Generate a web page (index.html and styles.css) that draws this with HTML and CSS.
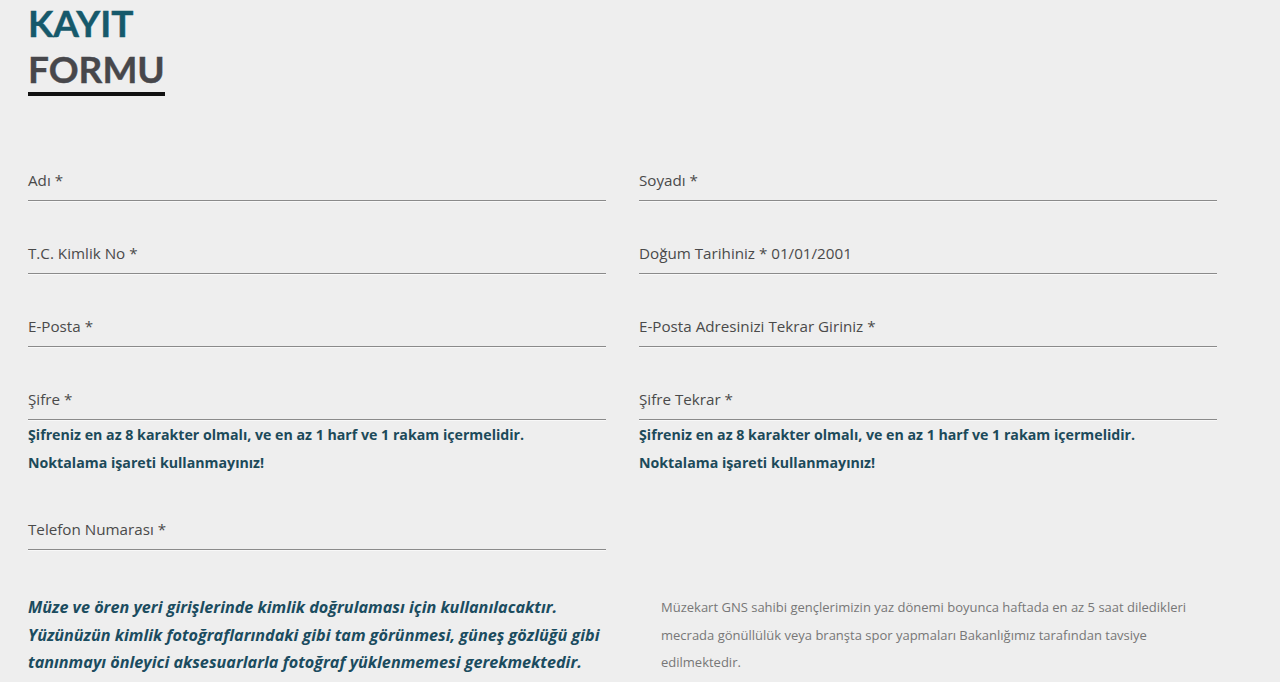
FILE: index.html
```html
<!DOCTYPE html>
<html lang="tr">
<head>
<meta charset="utf-8">
<title>Kayıt Formu</title>
<link rel="stylesheet" href="styles.css">
</head>
<body>
<main class="page">
  <h1 class="title"><span class="title-top">KAYIT</span><span class="title-bottom">FORMU</span></h1>

  <form class="form">
    <div class="col">
      <div class="field"><span class="label">Adı *</span></div>
      <div class="field"><span class="label">T.C. Kimlik No *</span></div>
      <div class="field"><span class="label">E-Posta *</span></div>
      <div class="field"><span class="label">Şifre *</span></div>
      <p class="hint">Şifreniz en az 8 karakter olmalı, ve en az 1 harf ve 1 rakam içermelidir.<br>Noktalama işareti kullanmayınız!</p>
      <div class="field"><span class="label">Telefon Numarası *</span></div>
    </div>
    <div class="col">
      <div class="field"><span class="label">Soyadı *</span></div>
      <div class="field"><span class="label">Doğum Tarihiniz * 01/01/2001</span></div>
      <div class="field"><span class="label">E-Posta Adresinizi Tekrar Giriniz *</span></div>
      <div class="field"><span class="label">Şifre Tekrar *</span></div>
      <p class="hint">Şifreniz en az 8 karakter olmalı, ve en az 1 harf ve 1 rakam içermelidir.<br>Noktalama işareti kullanmayınız!</p>
    </div>
  </form>

  <section class="notes">
    <p class="note-main">Müze ve ören yeri girişlerinde kimlik doğrulaması için kullanılacaktır.<br>Yüzünüzün kimlik fotoğraflarındaki gibi tam görünmesi, güneş gözlüğü gibi<br>tanınmayı önleyici aksesuarlarla fotoğraf yüklenmemesi gerekmektedir.</p>
    <p class="note-side">Müzekart GNS sahibi gençlerimizin yaz dönemi boyunca haftada en az 5 saat diledikleri<br>mecrada gönüllülük veya branşta spor yapmaları Bakanlığımız tarafından tavsiye<br>edilmektedir.</p>
  </section>
</main>
</body>
</html>
```

FILE: styles.css
```css
* { box-sizing: border-box; }

html, body {
  margin: 0;
  padding: 0;
  background: #eeeeee;
  font-family: "Open Sans", "Liberation Sans", sans-serif;
  overflow: hidden;
}

.page {
  padding: 0 28px;
  width: 1280px;
  height: 682px;
}

.title {
  display: inline-flex;
  flex-direction: column;
  margin: 0;
  padding: 0;
  border-bottom: 4px solid #111;
  font-family: "Lato", "Liberation Sans", sans-serif;
  font-weight: 700;
  font-size: 37px;
  line-height: 46px;
  letter-spacing: 0;
  -webkit-text-stroke: 0.4px currentColor;
}

.title-top { color: #16596b; }
.title-bottom { color: #47474b; }

.form {
  display: grid;
  grid-template-columns: 578px 578px;
  column-gap: 33px;
  margin-top: 64px;
}

.col {
  display: flex;
  flex-direction: column;
  gap: 32px;
}

.field {
  height: 41px;
  padding-top: 10px;
  border-bottom: 1px solid #8a8a8a;
  box-shadow: 0 1px 0 #f8f8f8;
}

.label {
  display: block;
  font-size: 15.2px;
  line-height: 20px;
  color: #4a4a4a;
}

.hint {
  margin: -31px 0 0;
  font-size: 14.2px;
  font-weight: 700;
  line-height: 28px;
  color: #1c4a5a;
}

.notes {
  display: grid;
  grid-template-columns: 578px 578px;
  column-gap: 33px;
  margin-top: 44px;
}

.note-main {
  margin: 0;
  font-size: 16.2px;
  font-style: italic;
  font-weight: 700;
  line-height: 27.5px;
  color: #1b4c5f;
}

.note-side {
  margin: 0;
  padding-left: 22px;
  font-size: 13px;
  line-height: 27.5px;
  color: #777;
}
```
